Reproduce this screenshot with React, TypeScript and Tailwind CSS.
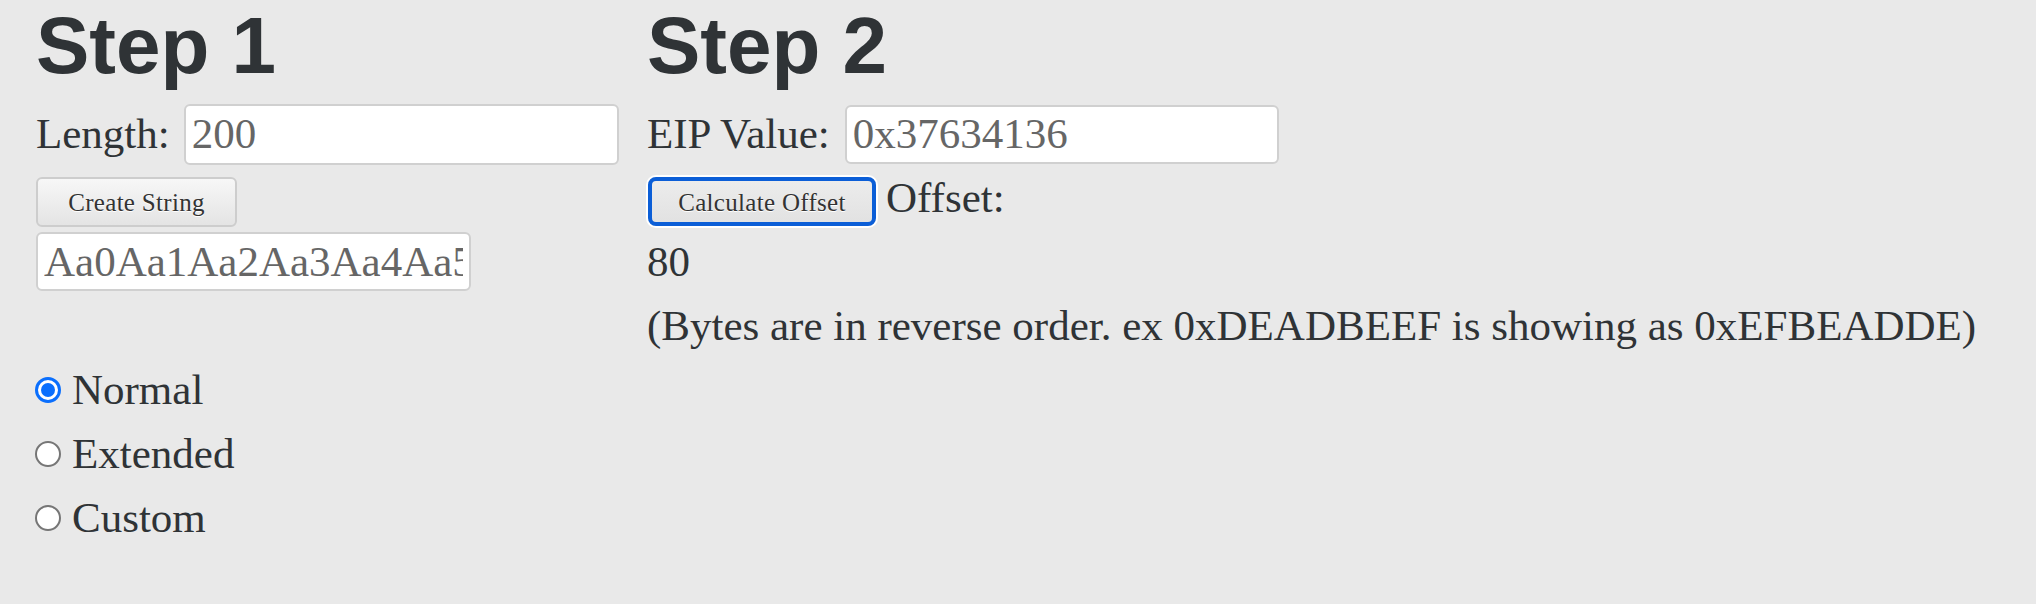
import React from "react";

function Radio({ checked }: { checked?: boolean }) {
  if (checked) {
    return (
      <span className="ml-[-1px] flex h-[26px] w-[26px] shrink-0 items-center justify-center rounded-full border-[3px] border-[#0b6ffd] bg-white">
        <span className="h-[14px] w-[14px] rounded-full bg-[#0b6ffd]" />
      </span>
    );
  }
  return <span className="ml-[-1px] h-[26px] w-[26px] shrink-0 rounded-full border-2 border-[#767676] bg-white" />;
}

export default function App() {
  return (
    <div className="min-h-screen w-full bg-[#e9e9e9] font-['Liberation_Serif','Times_New_Roman',serif] text-[43px] leading-[64px] text-[#2f3336]">
      <div className="flex pl-[36px]">
        <div className="w-[611px] shrink-0">
          <h1 className="h-[92px] font-['Liberation_Sans',Arial,sans-serif] text-[80px] font-bold leading-[92px]">Step 1</h1>
          <div className="mt-[10px] flex h-[64px] items-center">
            <span>Length:</span>
            <div className="ml-[14px] flex h-[61px] w-[435px] items-center rounded-[6px] border-2 border-[#d0d0d0] bg-white px-[6px] text-[#666]">
              200
            </div>
          </div>
          <button className="mt-[11px] flex h-[50px] w-[201px] items-center justify-center rounded-[6px] border-2 border-[#cdcdcd] bg-gradient-to-b from-[#f7f7f7] to-[#e4e4e4] pt-[2px] text-[25px] leading-[28px] tracking-[0.3px] text-[#333] [text-shadow:0_1px_0_#fff]">
            Create String
          </button>
          <div className="mt-[5px] flex h-[59px] w-[435px] items-center rounded-[6px] border-2 border-[#d0d0d0] bg-white px-[6px] text-[#666]">
            <div className="w-full overflow-hidden whitespace-nowrap">Aa0Aa1Aa2Aa3Aa4Aa5Aa</div>
          </div>
          <div className="mt-[67px]">
            <label className="flex h-[64px] items-center">
              <Radio checked />
              <span className="ml-[11px]">Normal</span>
            </label>
            <label className="flex h-[64px] items-center">
              <Radio />
              <span className="ml-[11px]">Extended</span>
            </label>
            <label className="flex h-[64px] items-center">
              <Radio />
              <span className="ml-[11px]">Custom</span>
            </label>
          </div>
        </div>
        <div className="flex-1">
          <h1 className="h-[92px] font-['Liberation_Sans',Arial,sans-serif] text-[80px] font-bold leading-[92px]">Step 2</h1>
          <div className="mt-[10px] flex h-[64px] items-center">
            <span>EIP Value:</span>
            <div className="ml-[15px] flex h-[59px] w-[434px] items-center rounded-[6px] border-2 border-[#d0d0d0] bg-white px-[6px] text-[#666]">
              0x37634136
            </div>
          </div>
          <div className="flex h-[64px] items-center">
            <button className="ml-[1px] mt-[7px] flex h-[49px] w-[228px] items-center justify-center rounded-[8px] border-[4px] border-[#0b5ed7] bg-gradient-to-b from-[#ececec] to-[#e2e2e2] pt-[2px] text-[25px] leading-[28px] tracking-[0.3px] text-[#333] shadow-[0_0_0_2px_#fff] [text-shadow:0_1px_0_#fff]">
              Calculate Offset
            </button>
            <span className="ml-[10px]">Offset:</span>
          </div>
          <div>80</div>
          <p>(Bytes are in reverse order. ex 0xDEADBEEF is showing as 0xEFBEADDE)</p>
        </div>
      </div>
    </div>
  );
}
